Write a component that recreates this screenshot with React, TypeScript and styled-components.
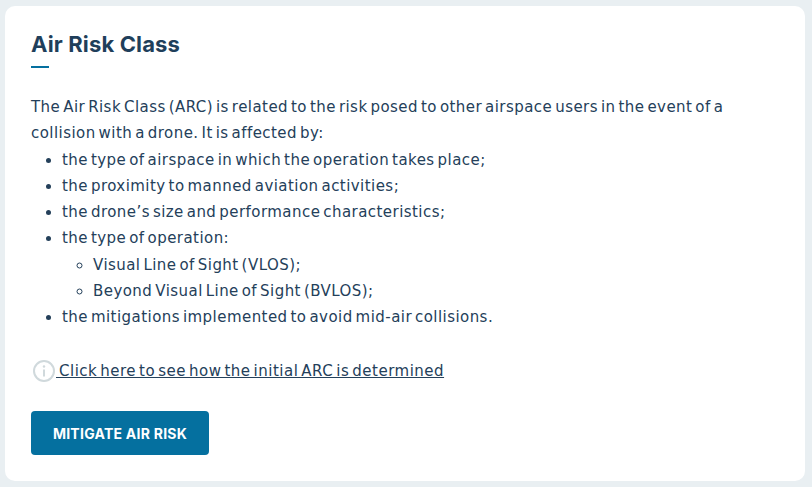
import styled, { createGlobalStyle } from "styled-components";

const GlobalStyle = createGlobalStyle`
  html, body {
    margin: 0;
    padding: 0;
    background: #e9eff2;
  }
  body {
    font-family: "DejaVu Sans", "Inter", sans-serif;
  }
`;

const Page = styled.div`
  width: 812px;
  height: 487px;
  box-sizing: border-box;
  padding: 6px 7px 6px 5px;
  overflow: hidden;
`;

const Card = styled.section`
  height: 475px;
  box-sizing: border-box;
  padding: 23px 26px 0;
  background: #fff;
  border-radius: 10px;
`;

const Title = styled.h1`
  margin: 0;
  font-family: "Inter", sans-serif;
  font-size: 22px;
  line-height: 30px;
  font-weight: 700;
  letter-spacing: 0.15px;
  color: #1f3f5b;
`;

const TitleRule = styled.div`
  width: 18px;
  height: 2px;
  margin-top: 7px;
  background: #05709f;
`;

const Body = styled.div`
  margin-top: 26px;
  font-size: 15px;
  line-height: 26.25px;
  letter-spacing: 0.45px;
  word-spacing: -2.25px;
  color: #24405a;
`;

const Paragraph = styled.p`
  margin: 0;
`;

const List = styled.ul<{ $nested?: boolean }>`
  margin: 0;
  padding-left: 31px;
  list-style-type: ${(props) => (props.$nested ? "circle" : "disc")};
`;

const InfoLink = styled.a`
  display: flex;
  align-items: center;
  margin-top: 28px;
  height: 26px;
  font-size: 15px;
  letter-spacing: 0.5px;
  word-spacing: -2.25px;
  color: #24405a;
  text-decoration: underline;
  white-space: pre;
`;

const InfoIcon = styled.svg`
  width: 24px;
  height: 24px;
  margin-left: 1px;
  flex: none;
`;

const Action = styled.button`
  display: block;
  width: 178px;
  height: 44px;
  margin-top: 27px;
  padding: 0;
  border: none;
  border-radius: 4px;
  background: #05709f;
  color: #fff;
  font-family: "Inter", sans-serif;
  font-size: 14px;
  font-weight: 700;
  letter-spacing: 0.25px;
`;

export default function App() {
  return (
    <>
      <GlobalStyle />
      <Page>
        <Card>
          <Title>Air Risk Class</Title>
          <TitleRule />
          <Body>
            <Paragraph>
              The Air Risk Class (ARC) is related to the risk posed to other airspace users in the event of a
              collision with a drone. It is affected by:
            </Paragraph>
            <List>
              <li>the type of airspace in which the operation takes place;</li>
              <li>the proximity to manned aviation activities;</li>
              <li>the drone’s size and performance characteristics;</li>
              <li>
                the type of operation:
                <List $nested>
                  <li>Visual Line of Sight (VLOS);</li>
                  <li>Beyond Visual Line of Sight (BVLOS);</li>
                </List>
              </li>
              <li>the mitigations implemented to avoid mid-air collisions.</li>
            </List>
          </Body>
          <InfoLink href="#">
            <InfoIcon viewBox="0 0 24 24" fill="none" stroke="#d0d9dc" strokeWidth="2">
              <circle cx="12" cy="12" r="10" />
              <circle cx="12" cy="7.5" r="1.2" fill="#d0d9dc" stroke="none" />
              <path d="M12 10.5v7" />
            </InfoIcon>
            <span> Click here to see how the initial ARC is determined</span>
          </InfoLink>
          <Action>MITIGATE AIR RISK</Action>
        </Card>
      </Page>
    </>
  );
}
